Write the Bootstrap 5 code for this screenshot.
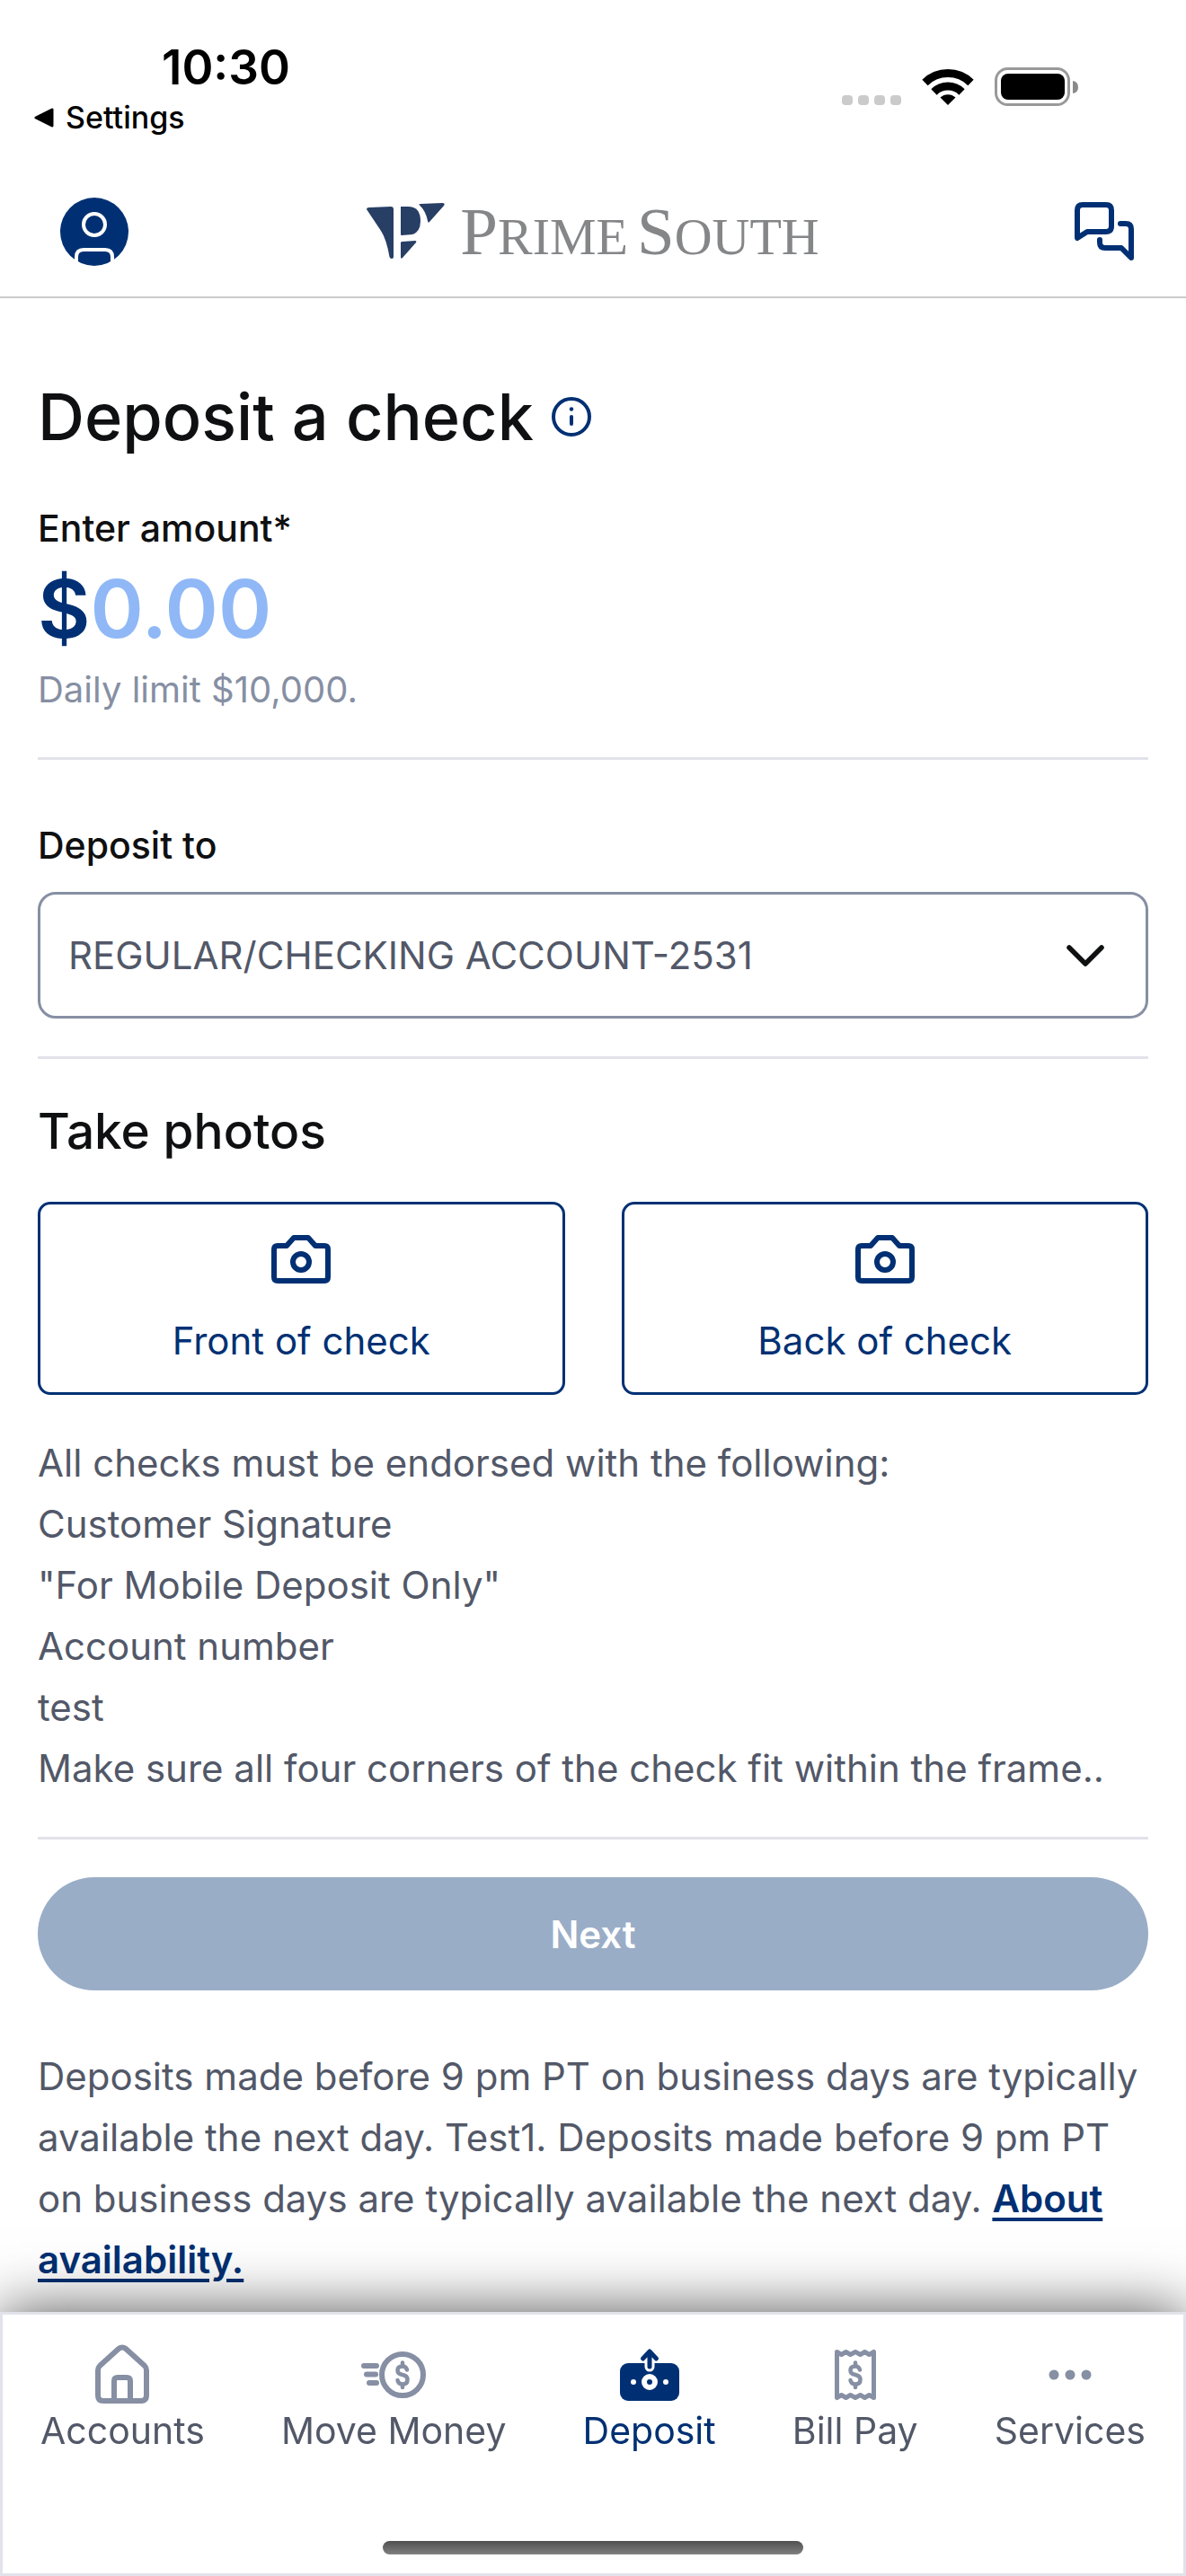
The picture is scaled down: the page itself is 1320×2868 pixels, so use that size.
<!DOCTYPE html>
<html lang="en">
<head>
<meta charset="utf-8">
<meta name="viewport" content="width=device-width, initial-scale=1">
<title>Deposit a check</title>
<link href="https://cdn.jsdelivr.net/npm/bootstrap@5.3.0/dist/css/bootstrap.min.css" rel="stylesheet">
<style>
  :root { --navy: #003073; --ink: #0f1011; --slate: #525868; --mist: #868fa3; --line: #e2e2ea; }
  body { font-family: Inter, "Noto Sans", sans-serif; font-size: 42px; line-height: 68px; color: var(--slate); background: #fff; }
  svg { display: block; flex: none; }
  .status-bar { padding: 45px 120px 0 38px; color: #000; }
  .clock { font-size: 53px; line-height: 60px; font-weight: 600; padding-left: 142px; }
  .back-link { font-size: 34px; line-height: 52px; font-weight: 500; color: #000; gap: 13px; }
  .status-icons { gap: 23px; padding-top: 30px; }
  .app-header { display: grid; grid-template-columns: 1fr auto 1fr; padding: 63px 0 34px; border-bottom: 2px solid #cbcbcb; }
  .header-start { padding-left: 67px; }
  .header-end { padding-right: 57px; }
  .brand-name { font-family: "Liberation Serif", serif; color: #858688; font-size: 75px; line-height: 76px; gap: 10px; }
  .brand-caps { font-size: 58px; line-height: 50px; }
  .app-main { padding: 88px 42px 320px; }
  .page-title { font-size: 72px; line-height: 88px; font-weight: 500; color: var(--ink); gap: 20px; margin-bottom: 52px; }
  .field-label { font-size: 41px; line-height: 56px; font-weight: 500; color: var(--ink); }
  .amount-row { font-size: 90px; line-height: 104px; font-weight: 600; color: var(--navy); margin: 10px 0; }
  .amount-input { font: inherit; color: var(--navy); border: 0; padding: 0; min-width: 0; height: 104px; outline: 0; background: none; }
  .amount-input::placeholder { color: #90b8f6; opacity: 1; }
  .limit-note { font-size: 40px; line-height: 56px; color: var(--mist); }
  .rule { border: 0; border-top: 3px solid var(--line); opacity: 1; margin: 42px 0; }
  .rule-loose { margin: 47px 0 67px; }
  .rule-section { margin-bottom: 48px; }
  .account-select { height: 141px; border: 3px solid var(--mist); border-radius: 20px; font-size: 42px; color: var(--slate); margin-top: 24px; padding: 0 130px 0 31px;
    background-image: url("data:image/svg+xml,%3Csvg xmlns='http://www.w3.org/2000/svg' viewBox='0 0 44 28'%3E%3Cpath d='M4 5 22 23 40 5' fill='none' stroke='%230f1011' stroke-width='5.5' stroke-linecap='round' stroke-linejoin='round'/%3E%3C/svg%3E");
    background-size: 44px 28px; background-position: right 45px center; }
  .section-title { font-size: 55px; line-height: 64px; font-weight: 500; color: var(--ink); margin-bottom: 47px; }
  .photo-grid { gap: 63px; margin-bottom: 42px; }
  .photo-btn { border: 3px solid var(--navy); border-radius: 14px; color: var(--navy); font-size: 42px; line-height: 56px; padding: 34px 20px 29px; gap: 36px; }
  .next-btn { height: 126px; font-size: 42px; font-weight: 600; margin-bottom: 62px; }
  .next-btn:disabled { background: #9aadc7; color: #fff; opacity: 1; border: 0; }
  .about-link { color: var(--navy); font-weight: 600; text-underline-offset: 6px; }
  .tab-bar { border: 3px solid var(--line); background: #fff; box-shadow: 0 0 64px rgba(0, 0, 0, .68); padding: 31px 42px 21px; }
  .tab-link { font-size: 41px; line-height: 52px; color: var(--slate); text-decoration: none; }
  .tab-link svg { color: var(--mist); }
  .tab-link.active, .tab-link.active svg { color: var(--navy); }
  .home-indicator { width: 38%; height: 15px; border-radius: 8px; background: linear-gradient(#505050, #808080); margin-top: 97px; }
</style>
</head>
<body>
<svg class="d-none" aria-hidden="true">
  <symbol id="camera" viewBox="0 0 66 54"><path d="M7 12h10l8-9h16l8 9h10q4 0 4 4v31q0 4-4 4H7q-4 0-4-4V16q0-4 4-4z" fill="none" stroke="currentColor" stroke-width="6" stroke-linejoin="round"/><circle cx="33" cy="30" r="9" fill="none" stroke="currentColor" stroke-width="6"/></symbol>
  <symbol id="dollar" viewBox="0 0 18 40"><path d="M9 6.500v3M9 31v3M14 14.500q-1-4-5-4-5.500 0-5.500 4.500 0 4 5.500 5 5.500 1 5.500 5.500 0 5-5.500 5-4.500 0-5.500-4.500" fill="none" stroke="currentColor" stroke-width="4.500" stroke-linecap="round"/></symbol>
</svg>

<div class="status-bar d-flex justify-content-between align-items-start">
  <div>
    <div class="clock">10:30</div>
    <a class="back-link d-flex align-items-center text-decoration-none" href="#">
      <svg width="22" height="22" viewBox="0 0 22 22"><path d="M2 11 20 2v18z" fill="#000" stroke="#000" stroke-width="3" stroke-linejoin="round"/></svg>Settings</a>
  </div>
  <div class="status-icons d-flex align-items-center">
    <svg width="66" height="44" viewBox="0 0 66 44" fill="#cbcbcb"><rect y="31" width="12" height="11" rx="4"/><rect x="18" y="31" width="12" height="11" rx="4"/><rect x="36" y="31" width="12" height="11" rx="4"/><rect x="54" y="31" width="12" height="11" rx="4"/></svg>
    <svg width="58" height="44" viewBox="0 0 58 44"><g fill="none" stroke="#000" stroke-width="9"><path d="M3.500 17a36.500 36.500 0 0 1 51 0"/><path d="M13.500 27.500a22 22 0 0 1 31 0"/></g><path d="M20.500 33.500a12.500 12.500 0 0 1 17 0L29 42z" fill="#000"/></svg>
    <svg width="93" height="44" viewBox="0 0 93 44"><rect x="1.500" y="1.500" width="81" height="40" rx="13" fill="none" stroke="#999" stroke-width="3"/><rect x="7" y="7" width="71" height="29" rx="8" fill="#000"/><path d="M87 15q6 1 6 7t-6 7z" fill="#8a8a8a"/></svg>
  </div>
</div>

<header class="app-header align-items-center">
  <div class="header-start d-flex"><a href="#" aria-label="Profile">
    <svg width="76" height="76" viewBox="0 0 76 76"><circle cx="38" cy="38" r="38" fill="#003073"/><g fill="none" stroke="#fff" stroke-width="4"><circle cx="38" cy="30" r="12"/><path d="M18 73V66q0-8 8-8h24q8 0 8 8v7"/></g></svg>
  </a></div>
  <div class="d-flex align-items-center gap-3">
    <svg width="88" height="64" viewBox="0 0 88 64" fill="#273e65"><path d="M0 7Q0 5 3 5L27 4Q30 4 30 7V60Q30 62 28 62T25.500 60Q22 40 16 31z"/><path d="M38 4h8q14 0 14 16 0 12-9 15l-12 1q-1 0-1-1z"/><path d="M38 44q0-1 2-1l14-1q2 0 1 2L40 61q-2 2-2-1z"/><path d="M59 2.500Q57 1 60 1L84 0q4 0 2 3L70 21q-1.500 2-2-1Q66 9 59 2.500z"/></svg>
    <div class="brand-name d-flex align-items-baseline"><span>P<span class="brand-caps">RIME</span></span><span>S<span class="brand-caps">OUTH</span></span></div>
  </div>
  <div class="header-end d-flex justify-content-end"><a href="#" aria-label="Messages">
    <svg width="68" height="68" viewBox="0 0 68 68" fill="none" stroke="#003073" stroke-width="6" stroke-linecap="round" stroke-linejoin="round"><path d="M4 41V10q0-6 6-6h26q6 0 6 6v18q0 6-6 6H15z"/><path d="M52 25h6q6 0 6 6v32L53 52H35q-6 0-6-6v-3"/></svg>
  </a></div>
</header>

<main class="app-main">
  <form>
    <h1 class="page-title d-flex align-items-center">Deposit a check
      <button type="button" class="btn p-0 border-0" aria-label="About deposits"><svg width="44" height="44" viewBox="0 0 44 44"><circle cx="22" cy="22" r="20" fill="none" stroke="#003073" stroke-width="4"/><circle cx="22" cy="13.500" r="2.200" fill="#003073"/><path d="M22 22v8" stroke="#003073" stroke-width="4" stroke-linecap="round"/></svg></button>
    </h1>
    <label class="field-label d-block" for="amount">Enter amount*</label>
    <div class="amount-row d-flex align-items-center"><span>$</span><input class="amount-input flex-grow-1" id="amount" type="text" inputmode="decimal" placeholder="0.00"></div>
    <div class="limit-note">Daily limit $10,000.</div>
    <hr class="rule rule-loose">
    <label class="field-label d-block" for="account">Deposit to</label>
    <select class="form-select account-select" id="account"><option>REGULAR/CHECKING ACCOUNT-2531</option></select>
    <hr class="rule rule-section">
    <h2 class="section-title">Take photos</h2>
    <div class="photo-grid d-flex">
      <button type="button" class="photo-btn btn flex-fill w-50 d-flex flex-column align-items-center"><svg width="66" height="54"><use href="#camera"/></svg>Front of check</button>
      <button type="button" class="photo-btn btn flex-fill w-50 d-flex flex-column align-items-center"><svg width="66" height="54"><use href="#camera"/></svg>Back of check</button>
    </div>
    <ul class="list-unstyled mb-0">
      <li>All checks must be endorsed with the following:</li>
      <li>Customer Signature</li>
      <li>"For Mobile Deposit Only"</li>
      <li>Account number</li>
      <li>test</li>
      <li>Make sure all four corners of the check fit within the frame..</li>
    </ul>
    <hr class="rule">
    <button type="submit" class="next-btn btn rounded-pill w-100" disabled>Next</button>
    <p class="mb-0">Deposits made before 9 pm PT on business days are typically available the next day. Test1. Deposits made before 9 pm PT on business days are typically available the next day. <a class="about-link" href="#">About availability.</a></p>
  </form>
</main>

<nav class="tab-bar fixed-bottom">
  <div class="d-flex justify-content-between">
    <a class="tab-link d-flex flex-column align-items-center" href="#"><svg width="72" height="72" viewBox="0 0 72 72" fill="none" stroke="currentColor" stroke-width="6" stroke-linejoin="round"><path d="M9 31q0-3 2-5L32 7q4-3 8 0l21 19q2 2 2 5v28q0 6-6 6H15q-6 0-6-6z"/><path d="M27 65V43q0-4 4-4h10q4 0 4 4v22"/></svg>Accounts</a>
    <a class="tab-link d-flex flex-column align-items-center" href="#"><svg width="74" height="72" viewBox="0 0 74 72"><g fill="none" stroke="currentColor" stroke-width="6" stroke-linecap="round"><circle cx="47" cy="36" r="23"/><path d="M4 26h14M7 35.500h10M10 45h8"/></g><use href="#dollar" x="38" y="16" width="18" height="40"/></svg>Move Money</a>
    <a class="tab-link active d-flex flex-column align-items-center" href="#" aria-current="page"><svg width="66" height="72" viewBox="0 0 66 72"><rect y="23" width="66" height="42" rx="9" fill="currentColor"/><path d="M33 12v15" stroke="#fff" stroke-width="11" stroke-linecap="round"/><path d="M33 10v17M25.500 18l7.500-8 7.500 8" fill="none" stroke="currentColor" stroke-width="5" stroke-linecap="round" stroke-linejoin="round"/><circle cx="33" cy="44" r="6" fill="none" stroke="#fff" stroke-width="6"/><circle cx="15" cy="44" r="3" fill="#fff"/><circle cx="51" cy="44" r="3" fill="#fff"/></svg>Deposit</a>
    <a class="tab-link d-flex flex-column align-items-center" href="#"><svg width="46" height="72" viewBox="0 0 46 72"><path d="M2.500 10.500l5 3 5-3 5 3 5.500-3 5.500 3 5-3 5 3 5-3v51l-5-3-5 3-5-3-5.500 3-5.500-3-5 3-5-3-5 3z" fill="none" stroke="currentColor" stroke-width="5" stroke-linejoin="round"/><use href="#dollar" x="14" y="16" width="18" height="40"/></svg>Bill Pay</a>
    <a class="tab-link d-flex flex-column align-items-center" href="#"><svg width="48" height="72" viewBox="0 0 48 72" fill="currentColor"><circle cx="6" cy="36" r="5.500"/><circle cx="24" cy="36" r="5.500"/><circle cx="42" cy="36" r="5.500"/></svg>Services</a>
  </div>
  <div class="home-indicator mx-auto"></div>
</nav>
<script src="https://cdn.jsdelivr.net/npm/bootstrap@5.3.0/dist/js/bootstrap.bundle.min.js"></script>
</body>
</html>
